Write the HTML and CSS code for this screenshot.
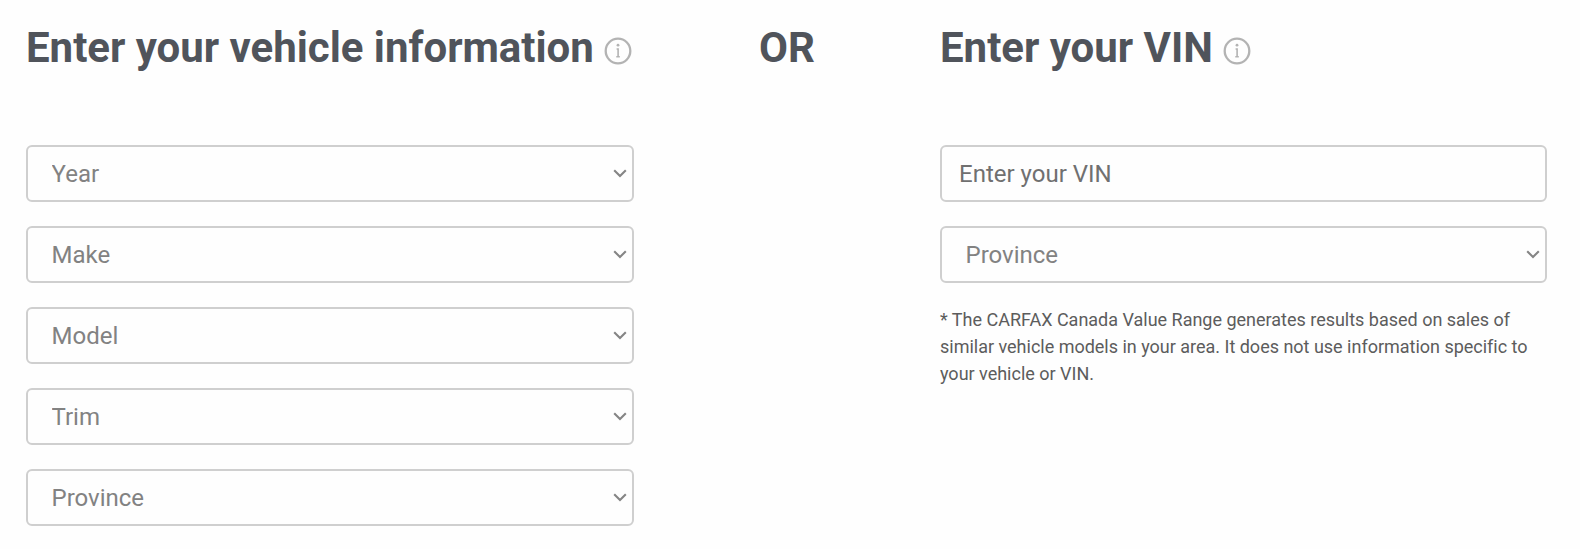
FILE: index.html
```
<!DOCTYPE html>
<html lang="en">
<head>
    <meta charset="UTF-8">
    <meta name="viewport" content="width=device-width, initial-scale=1.0">
    <title>Vehicle Value Range</title>
    <link rel="stylesheet" href="styles.css">
</head>
<body>
    <!-- Shared icons -->
    <svg class="sprite" aria-hidden="true">
        <symbol id="icon-info" viewBox="0 0 28 28">
            <circle cx="14" cy="14" r="12.3" fill="none" stroke="currentColor" stroke-width="2.3"/>
            <circle cx="14" cy="8.2" r="1.4" fill="currentColor"/>
            <path d="M12.6 12h1.5v7.5M12.3 19.8h3.5" fill="none" stroke="currentColor" stroke-width="1.6"/>
        </symbol>
        <symbol id="icon-chevron" viewBox="0 0 14 9">
            <path d="M1.2 1.2L7 7l5.8-5.8" fill="none" stroke="currentColor" stroke-width="2.1"/>
        </symbol>
    </svg>

    <form class="container">
        <!-- Vehicle Section -->
        <div class="panel">
            <h2>Enter your vehicle information <svg class="info-icon"><use href="#icon-info"/></svg></h2>
            <div class="fields">
                <div class="select-box">
                    <select aria-label="Year"><option>Year</option></select>
                    <svg class="chevron"><use href="#icon-chevron"/></svg>
                </div>
                <div class="select-box">
                    <select aria-label="Make"><option>Make</option></select>
                    <svg class="chevron"><use href="#icon-chevron"/></svg>
                </div>
                <div class="select-box">
                    <select aria-label="Model"><option>Model</option></select>
                    <svg class="chevron"><use href="#icon-chevron"/></svg>
                </div>
                <div class="select-box">
                    <select aria-label="Trim"><option>Trim</option></select>
                    <svg class="chevron"><use href="#icon-chevron"/></svg>
                </div>
                <div class="select-box">
                    <select aria-label="Province"><option>Province</option></select>
                    <svg class="chevron"><use href="#icon-chevron"/></svg>
                </div>
            </div>
        </div>

        <h2 class="divider">OR</h2>

        <!-- VIN Section -->
        <div class="panel">
            <h2>Enter your VIN <svg class="info-icon"><use href="#icon-info"/></svg></h2>
            <div class="fields">
                <input type="text" placeholder="Enter your VIN" aria-label="VIN">
                <div class="select-box">
                    <select aria-label="Province"><option>Province</option></select>
                    <svg class="chevron"><use href="#icon-chevron"/></svg>
                </div>
            </div>
            <p class="note">* The CARFAX Canada Value Range generates results based on sales of similar vehicle models in your area. It does not use information specific to your vehicle or VIN.</p>
        </div>
    </form>
</body>
</html>
```

FILE: styles.css
```
/* General Styling */
* {
    margin: 0;
    padding: 0;
    box-sizing: border-box;
    font-family: Roboto, Arial, sans-serif;
}

body {
    background-color: #fefefe;
}

.sprite {
    display: none;
}

.container {
    display: grid;
    grid-template-columns: 608px 306px 607px;
    padding: 20px 26px;
}

/* Headings */
h2 {
    display: flex;
    align-items: center;
    height: 54px;
    margin-bottom: 71px;
    font-size: 42px;
    font-weight: 700;
    letter-spacing: -0.02px;
    color: #50545b;
    white-space: nowrap;
}

.divider {
    justify-content: center;
}

.info-icon {
    width: 28px;
    height: 28px;
    margin: 7px 0 0 10px;
    color: #b3b3b3;
}

/* Fields */
.fields {
    display: flex;
    flex-direction: column;
    gap: 24px;
}

.select-box {
    display: grid;
    align-items: center;
}

.select-box select,
.chevron {
    grid-area: 1 / 1;
}

select,
input {
    appearance: none;
    width: 100%;
    height: 57px;
    background-color: #fefefe;
    border: 2px solid #cfcfcf;
    border-radius: 6px;
    font-size: 24px;
}

select {
    padding: 0 23.5px;
    color: #828282;
}

input {
    padding: 0 17px;
}

input::placeholder {
    color: #707070;
}

.chevron {
    justify-self: end;
    width: 14px;
    height: 9px;
    margin-right: 7px;
    color: #858585;
    pointer-events: none;
}

.note {
    margin-top: 23px;
    font-size: 18px;
    line-height: 27px;
    letter-spacing: -0.01px;
    color: #5c5c5c;
}
```
